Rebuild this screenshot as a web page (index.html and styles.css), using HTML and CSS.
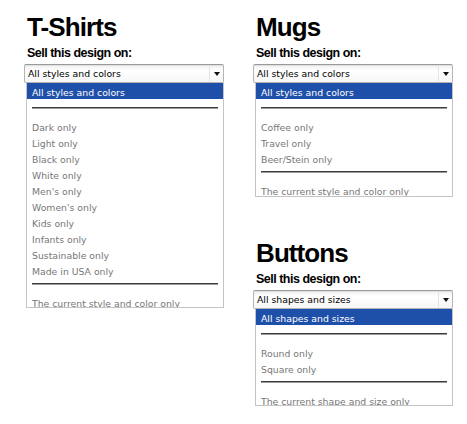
FILE: index.html
```html
<!DOCTYPE html>
<html>
<head>
<meta charset="utf-8">
<link rel="stylesheet" href="styles.css">
</head>
<body>
<div class="page">
  <div class="col">
    <section class="product">
      <h2 class="title">T-Shirts</h2>
      <div class="label">Sell this design on:</div>
      <div class="select"><span class="value">All styles and colors</span><span class="arrow-cell"><span class="arrow"></span></span></div>
      <div class="list list-tshirts">
        <div class="opt selected">All styles and colors</div>
        <div class="sep sep-top"></div>
        <div class="opt">Dark only</div>
        <div class="opt">Light only</div>
        <div class="opt">Black only</div>
        <div class="opt">White only</div>
        <div class="opt">Men's only</div>
        <div class="opt">Women's only</div>
        <div class="opt">Kids only</div>
        <div class="opt">Infants only</div>
        <div class="opt">Sustainable only</div>
        <div class="opt">Made in USA only</div>
        <div class="sep"></div>
        <div class="opt">The current style and color only</div>
      </div>
    </section>
  </div>
  <div class="col">
    <section class="product">
      <h2 class="title">Mugs</h2>
      <div class="label">Sell this design on:</div>
      <div class="select"><span class="value">All styles and colors</span><span class="arrow-cell"><span class="arrow"></span></span></div>
      <div class="list list-mugs">
        <div class="opt selected">All styles and colors</div>
        <div class="sep sep-top"></div>
        <div class="opt">Coffee only</div>
        <div class="opt">Travel only</div>
        <div class="opt">Beer/Stein only</div>
        <div class="sep"></div>
        <div class="opt">The current style and color only</div>
      </div>
    </section>
    <section class="product product-buttons">
      <h2 class="title">Buttons</h2>
      <div class="label">Sell this design on:</div>
      <div class="select"><span class="value">All shapes and sizes</span><span class="arrow-cell"><span class="arrow"></span></span></div>
      <div class="list list-buttons">
        <div class="opt selected">All shapes and sizes</div>
        <div class="sep sep-top"></div>
        <div class="opt">Round only</div>
        <div class="opt">Square only</div>
        <div class="sep"></div>
        <div class="opt">The current shape and size only</div>
      </div>
    </section>
  </div>
</div>
</body>
</html>
```

FILE: styles.css
```css
html, body {
  margin: 0;
  padding: 0;
  background: #ffffff;
}

.page {
  display: grid;
  grid-template-columns: 200px 200px;
  column-gap: 29px;
  padding: 12px 0 0 24px;
}

.col {
  display: flex;
  flex-direction: column;
}

.product-buttons {
  margin-top: 41px;
}

.title {
  margin: 0;
  padding-left: 3px;
  font-family: "Liberation Sans", Arial, sans-serif;
  font-weight: bold;
  font-size: 26px;
  letter-spacing: -0.9px;
  line-height: 31px;
  color: #000;
}

.label {
  margin-top: 3px;
  padding-left: 3px;
  font-family: "Liberation Sans", Arial, sans-serif;
  font-weight: bold;
  font-size: 12.5px;
  letter-spacing: -0.5px;
  line-height: 15px;
  color: #000;
}

.select {
  margin-top: 3px;
  height: 19px;
  box-sizing: border-box;
  display: flex;
  align-items: stretch;
  border: 1px solid #b4b4b4;
  border-top-color: #9a9a9a;
  border-radius: 2px;
  background: linear-gradient(#f1f1f1, #ffffff 35%, #f6f6f6);
  box-shadow: inset 0 1px 1px rgba(0, 0, 0, 0.08);
  font-family: "DejaVu Sans", Verdana, sans-serif;
  font-size: 9.3px;
  color: #000;
}

.value {
  flex: 1;
  padding-left: 3px;
  line-height: 17px;
  white-space: nowrap;
  overflow: hidden;
}

.arrow-cell {
  width: 13px;
  border-left: 1px solid #e4e4e4;
  display: flex;
  align-items: center;
  justify-content: center;
}

.arrow {
  width: 0;
  height: 0;
  border-top: 4px solid #111;
  border-left: 3.5px solid transparent;
  border-right: 3.5px solid transparent;
  margin-top: 1px;
}

.list {
  margin-left: 2px;
  box-sizing: border-box;
  border: 1px solid #c4c4c4;
  border-top: none;
  background: #fff;
  overflow: hidden;
  font-family: "DejaVu Sans", Verdana, sans-serif;
  font-size: 9.3px;
  color: #777777;
}

.list-tshirts { height: 225px; }
.list-mugs { height: 114px; }
.list-buttons { height: 97px; }

.opt {
  height: 16px;
  line-height: 16px;
  padding-left: 5px;
  white-space: nowrap;
}

.opt.selected {
  background: #1f50a9;
  color: #fff;
  padding-top: 4px;
  line-height: 12px;
  box-sizing: border-box;
}

.sep {
  height: 16px;
  box-sizing: border-box;
  padding: 3px 5px 0 5px;
}

.sep::before {
  content: "";
  display: block;
  height: 2px;
  background: linear-gradient(#3c3c3c 50%, #9a9a9a 50%);
}

.sep-top {
  height: 21px;
  padding-top: 8px;
}
```
